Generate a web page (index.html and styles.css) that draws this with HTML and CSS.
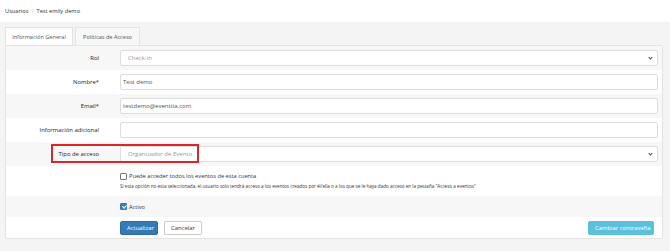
FILE: index.html
```html
<!DOCTYPE html>
<html lang="es">
  <head>
    <meta charset="UTF-8" />
    <meta name="viewport" content="width=device-width, initial-scale=1.0" />
    <title>Test emily demo</title>
    <link rel="stylesheet" href="styles.css">
  </head>
  <body>
    <div class="topbar">
      <span class="crumb">Usuarios</span>
      <span class="sep">/</span>
      <span class="crumb">Test emily demo</span>
    </div>

    <div class="main">
      <div class="tabs">
        <div class="tab active">Información General</div>
        <div class="tab">Políticas de Acceso</div>
      </div>

      <div class="panel">
        <div class="row shaded">
          <label class="label">Rol</label>
          <div class="field select">Check-in <span class="chev"></span></div>
        </div>
        <div class="row">
          <label class="label">Nombre*</label>
          <div class="field">Test demo</div>
        </div>
        <div class="row shaded">
          <label class="label">Email*</label>
          <div class="field">testdemo@eventtia.com</div>
        </div>
        <div class="row">
          <label class="label">Información adicional</label>
          <div class="field"></div>
        </div>
        <div class="row shaded">
          <label class="label">Tipo de acceso</label>
          <div class="field select">Organizador de Evento <span class="chev"></span></div>
          <div class="highlight"></div>
        </div>
        <div class="row check-row">
          <div></div>
          <div>
            <label class="check"><span class="box"></span> Puede acceder todos los eventos de esta cuenta</label>
            <p class="help">Si esta opción no esta seleccionada, el usuario solo tendrá acceso a los eventos creados por él/ella o a los que se le haya dado acceso en la pestaña "Acceso a eventos"</p>
          </div>
        </div>
        <div class="row shaded active-row">
          <div></div>
          <label class="check"><span class="box checked"></span> Activo</label>
        </div>
        <div class="row actions">
          <div></div>
          <div class="buttons">
            <button class="btn primary">Actualizar</button>
            <button class="btn">Cancelar</button>
            <button class="btn info">Cambiar contraseña</button>
          </div>
        </div>
      </div>
    </div>
  </body>
</html>
```

FILE: styles.css
```css
body {
  margin: 0;
  padding: 0;
  font-family: "Open Sans", Arial, sans-serif;
  background-color: #f4f4f5;
  color: #333;
  height: 251px;
  overflow: hidden;
}

.topbar {
  height: 22px;
  background-color: #fff;
  display: flex;
  align-items: center;
  gap: 3px;
  padding-left: 5px;
  font-size: 5.7px;
  color: #333;
}

.sep {
  color: #bbb;
}

.main {
  padding: 5px 7px 0 5px;
}

.tabs {
  display: flex;
  gap: 2px;
}

.tab {
  height: 18px;
  padding: 0 6px;
  display: flex;
  align-items: center;
  justify-content: center;
  white-space: nowrap;
  font-size: 5.6px;
  color: #555;
  border: 1px solid #e3e3e3;
  border-bottom: none;
  box-sizing: border-box;
  background-color: #f7f7f8;
}

.tab.active {
  background-color: #fff;
  width: 68px;
}

.tab:not(.active) {
  width: 65px;
}

.panel {
  background-color: #fff;
  border: 1px solid #e3e3e3;
  border-radius: 0 2px 2px 2px;
}

.row {
  display: grid;
  grid-template-columns: 114px 1fr;
  align-items: center;
  padding: 4px 4px 4px 0;
  position: relative;
}

.shaded {
  background-color: #f7f7f7;
}

.label {
  text-align: right;
  padding-right: 21px;
  font-size: 5.9px;
  font-weight: 500;
  color: #222;
}

.field {
  height: 16px;
  box-sizing: border-box;
  border: 1px solid #ddd;
  border-radius: 2px;
  background-color: #fff;
  padding-left: 2px;
  font-size: 6px;
  color: #555;
  display: flex;
  align-items: center;
}

.field.select {
  padding-left: 7px;
  color: #999;
  position: relative;
}

.chev {
  position: absolute;
  right: 5px;
  top: 5px;
  width: 2px;
  height: 2px;
  border-right: 1px solid #444;
  border-bottom: 1px solid #444;
  transform: rotate(45deg);
}

.highlight {
  position: absolute;
  left: 45px;
  top: 2px;
  width: 148px;
  height: 19px;
  box-sizing: border-box;
  border: 2px solid #d9262c;
}

.check-row {
  padding: 6px 0 7px 0;
}

.check {
  display: flex;
  align-items: center;
  gap: 2px;
  font-size: 5.7px;
  color: #333;
}

.box {
  width: 5px;
  height: 5px;
  border: 1px solid #777;
  border-radius: 1px;
  background-color: #fff;
  position: relative;
}

.box.checked {
  background-color: #337ab7;
  border-color: #337ab7;
}

.box.checked::after {
  content: "";
  position: absolute;
  left: 1.5px;
  top: 0;
  width: 1.5px;
  height: 3px;
  border-right: 1px solid #fff;
  border-bottom: 1px solid #fff;
  transform: rotate(45deg);
}

.help {
  margin: 3px 0 0 0;
  font-size: 4.6px;
  color: #333;
}

.active-row {
  height: 21px;
  padding: 0;
  box-sizing: border-box;
}

.actions {
  padding: 4px 8px 3px 0;
}

.buttons {
  display: flex;
  gap: 6px;
}

.btn {
  height: 14px;
  padding: 0 6px;
  white-space: nowrap;
  font-family: "Open Sans", Arial, sans-serif;
  font-size: 5.9px;
  border: 1px solid #ccc;
  border-radius: 2px;
  background-color: #fff;
  color: #333;
}

.btn.primary {
  background-color: #337ab7;
  border-color: #2e6da4;
  color: #fff;
  width: 38px;
}

.btn.info {
  margin-left: auto;
  background-color: #5bc0de;
  border-color: #5bc0de;
  color: #fff;
  width: 66px;
}
```
